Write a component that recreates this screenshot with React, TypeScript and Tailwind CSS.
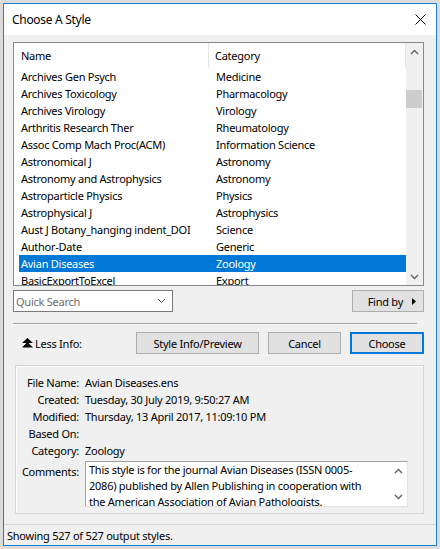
import React from "react";

const rows: [string, string][] = [
  ["Archives Gen Psych", "Medicine"],
  ["Archives Toxicology", "Pharmacology"],
  ["Archives Virology", "Virology"],
  ["Arthritis Research Ther", "Rheumatology"],
  ["Assoc Comp Mach Proc(ACM)", "Information Science"],
  ["Astronomical J", "Astronomy"],
  ["Astronomy and Astrophysics", "Astronomy"],
  ["Astroparticle Physics", "Physics"],
  ["Astrophysical J", "Astrophysics"],
  ["Aust J Botany_hanging indent_DOI", "Science"],
  ["Author-Date", "Generic"],
  ["Avian Diseases", "Zoology"],
  ["BasicExportToExcel", "Export"],
];

const ChevUp = ({ className = "" }: { className?: string }) => (
  <svg width="9" height="6" viewBox="0 0 9 6" className={className}>
    <path d="M1 5 L4.5 1.5 L8 5" fill="none" stroke="#606060" strokeWidth="1.4" />
  </svg>
);
const ChevDown = ({ className = "" }: { className?: string }) => (
  <svg width="9" height="6" viewBox="0 0 9 6" className={className}>
    <path d="M1 1 L4.5 4.5 L8 1" fill="none" stroke="#606060" strokeWidth="1.4" />
  </svg>
);

const info: [string, string][] = [
  ["File Name:", "Avian Diseases.ens"],
  ["Created:", "Tuesday, 30 July 2019, 9:50:27 AM"],
  ["Modified:", "Thursday, 13 April 2017, 11:09:10 PM"],
  ["Based On:", ""],
  ["Category:", "Zoology"],
];

export default function App() {
  return (
    <div
      className="w-[440px] h-[549px] bg-[#dcdcdc] p-[3px] text-[11px] tracking-[-0.25px] text-black leading-none"
      style={{ fontFamily: '"Noto Sans", "Open Sans", sans-serif' }}
    >
      <div className="w-full h-full border border-[#1a7fd4] bg-[#f0f0f0] flex flex-col">
        {/* Title bar */}
        <div className="h-[31px] bg-white flex items-center justify-between pl-[8px] pr-[8px] shrink-0">
          <span className="text-[12px] tracking-[-0.3px]">Choose A Style</span>
          <svg width="11" height="11" viewBox="0 0 11 11" className="mr-[2px]">
            <path d="M0.5 0.5 L10.5 10.5 M10.5 0.5 L0.5 10.5" stroke="#000" strokeWidth="1" />
          </svg>
        </div>

        <div className="flex-1 flex flex-col pl-[9px] pr-[12px] pt-[7px]">
          {/* List box */}
          <div className="h-[244px] border border-[#828790] bg-white flex overflow-hidden shrink-0">
            <div className="flex-1 flex flex-col">
              <div className="h-[25px] shrink-0 grid grid-cols-[195px_1fr] items-center">
                <div className="pl-[7px] h-full flex items-center border-r border-[#e5e5e5]">Name</div>
                <div className="pl-[6px] h-full flex items-center border-r border-[#e5e5e5]">Category</div>
              </div>
              <div className="flex flex-col pl-[5px]">
                {rows.map(([n, c], i) => {
                  const sel = i === 11;
                  return (
                    <div
                      key={n}
                      className={`h-[17px] shrink-0 grid grid-cols-[190px_1fr] items-center ${
                        sel ? "bg-[#0078d7] text-white" : ""
                      }`}
                    >
                      <div className="pl-[2px] whitespace-nowrap">{n}</div>
                      <div className="pl-[7px] whitespace-nowrap">{c}</div>
                    </div>
                  );
                })}
              </div>
            </div>
            {/* scrollbar */}
            <div className="w-[17px] shrink-0 bg-[#f0f0f0] flex flex-col items-center">
              <div className="h-[17px] w-full flex items-center justify-center">
                <ChevUp />
              </div>
              <div className="flex-1 w-full relative">
                <div className="absolute left-[0px] right-[1px] top-[30px] h-[18px] bg-[#cdcdcd]" />
              </div>
              <div className="h-[17px] w-full flex items-center justify-center">
                <ChevDown />
              </div>
            </div>
          </div>

          {/* Search row */}
          <div className="mt-[4px] h-[22px] flex items-center justify-between shrink-0">
            <div className="w-[160px] h-[22px] border border-[#7a7a7a] bg-white flex items-center justify-between pl-[2px] pr-[6px]">
              <span className="text-[#6d6d6d]">Quick Search</span>
              <svg width="9" height="6" viewBox="0 0 9 6">
                <path d="M1 1 L4.5 4.5 L8 1" fill="none" stroke="#555" strokeWidth="1" />
              </svg>
            </div>
            <div className="w-[72px] h-[22px] border border-[#adadad] bg-[#e1e1e1] flex items-center justify-end pr-[7px] gap-[9px]">
              <span>Find by</span>
              <svg width="4" height="7" viewBox="0 0 4 7">
                <path d="M0 0 L4 3.5 L0 7 Z" fill="#000" />
              </svg>
            </div>
          </div>

          {/* separator */}
          <div className="mt-[11px] mr-[7px] border-t border-[#a0a0a0] border-b border-b-white shrink-0" />

          {/* button row */}
          <div className="mt-[7px] h-[22px] flex items-center shrink-0">
            <div className="flex items-center pl-[9px] w-[123px] gap-[2px]">
              <svg width="11" height="10" viewBox="0 0 11 10">
                <path d="M5.5 0 L11 5 L0 5 Z M5.5 4 L11 9.5 L0 9.5 Z" fill="#000" />
              </svg>
              <span>Less Info:</span>
            </div>
            <div className="w-[123px] h-[22px] border border-[#adadad] bg-[#e1e1e1] flex items-center justify-center">
              Style Info/Preview
            </div>
            <div className="ml-[9px] w-[73px] h-[22px] border border-[#adadad] bg-[#e1e1e1] flex items-center justify-center">
              Cancel
            </div>
            <div className="ml-[9px] w-[74px] h-[22px] border-2 border-[#0078d7] bg-[#e1e1e1] flex items-center justify-center">
              Choose
            </div>
          </div>

          {/* info panel */}
          <div className="mt-[11px] ml-[2px] h-[149px] border border-[#d5d5d5] shadow-[inset_1px_1px_0_#ffffff] flex flex-col pt-[8px] shrink-0">
            {info.map(([l, v]) => (
              <div key={l} className="h-[17px] flex items-center shrink-0">
                <div className="w-[63px] text-right whitespace-nowrap">{l}</div>
                <div className="pl-[6px] whitespace-nowrap">{v}</div>
              </div>
            ))}
            <div className="mt-[2px] flex items-start">
              <div className="w-[63px] text-right pt-[5px]">Comments:</div>
              <div className="ml-[6px] w-[323px] h-[46px] bg-white border border-[#a0a0a0] border-r-[#e3e3e3] border-b-[#e3e3e3] flex overflow-hidden">
                <div className="flex-1 pl-[3px] leading-[16px] whitespace-nowrap">
                  This style is for the journal Avian Diseases (ISSN 0005-
                  <br />
                  2086) published by Allen Publishing in cooperation with
                  <br />
                  the American Association of Avian Pathologists.
                </div>
                <div className="w-[17px] shrink-0 flex flex-col items-center justify-between py-[6px]">
                  <ChevUp />
                  <ChevDown />
                </div>
              </div>
            </div>
          </div>

          <div className="flex-1" />
        </div>

        {/* status bar */}
        <div className="h-[21px] border-t border-[#d7d7d7] flex items-center pl-[3px] shrink-0">
          Showing 527 of 527 output styles.
        </div>
      </div>
    </div>
  );
}
